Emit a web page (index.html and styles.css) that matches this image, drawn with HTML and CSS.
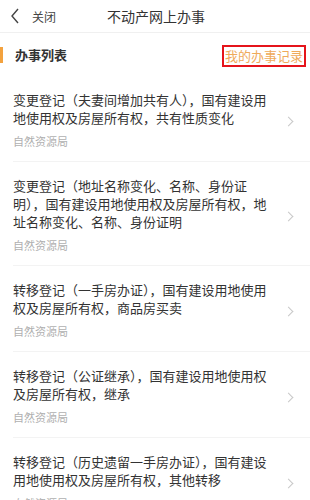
FILE: index.html
```html
<!DOCTYPE html>
<html lang="zh-CN">
<head>
    <meta charset="UTF-8">
    <meta name="viewport" content="width=device-width, initial-scale=1.0">
    <title>不动产网上办事</title>
    <link rel="stylesheet" href="styles.css">
</head>
<body>
    <div class="topbar">
        <div class="topbar-left">
            <svg class="back-icon" width="10" height="16" viewBox="0 0 10 16">
                <path d="M8 1 L2 8 L8 15" fill="none" stroke="#444" stroke-width="1.4"/>
            </svg>
            <span class="close-text">关闭</span>
        </div>
        <div class="topbar-title">不动产网上办事</div>
    </div>

    <div class="section-head">
        <div class="section-title">办事列表</div>
        <div class="record-link">我的办事记录</div>
    </div>

    <ul class="item-list">
        <li class="item">
            <div class="item-body">
                <div class="item-title">变更登记（夫妻间增加共有人），国有建设用地使用权及房屋所有权，共有性质变化</div>
                <div class="item-dept">自然资源局</div>
            </div>
            <span class="arrow"></span>
        </li>
        <li class="item">
            <div class="item-body">
                <div class="item-title">变更登记（地址名称变化、名称、身份证明），国有建设用地使用权及房屋所有权，地址名称变化、名称、身份证明</div>
                <div class="item-dept">自然资源局</div>
            </div>
            <span class="arrow"></span>
        </li>
        <li class="item">
            <div class="item-body">
                <div class="item-title">转移登记（一手房办证），国有建设用地使用权及房屋所有权，商品房买卖</div>
                <div class="item-dept">自然资源局</div>
            </div>
            <span class="arrow"></span>
        </li>
        <li class="item">
            <div class="item-body">
                <div class="item-title">转移登记（公证继承），国有建设用地使用权及房屋所有权，继承</div>
                <div class="item-dept">自然资源局</div>
            </div>
            <span class="arrow"></span>
        </li>
        <li class="item">
            <div class="item-body">
                <div class="item-title">转移登记（历史遗留一手房办证），国有建设用地使用权及房屋所有权，其他转移</div>
                <div class="item-dept">自然资源局</div>
            </div>
            <span class="arrow"></span>
        </li>
    </ul>
</body>
</html>
```

FILE: styles.css
```css
body {
    font-family: "Noto Sans CJK SC", "Noto Sans", sans-serif;
    background-color: #ffffff;
    color: #333;
    margin: 0;
    padding: 0;
}

.topbar {
    position: relative;
    height: 32px;
    display: flex;
    align-items: center;
    justify-content: center;
    border-bottom: 1px solid #f0f0f0;
}

.topbar-left {
    position: absolute;
    left: 10px;
    top: 0;
    height: 32px;
    display: flex;
    align-items: center;
}

.back-icon {
    display: block;
}

.close-text {
    margin-left: 12px;
    font-size: 12px;
    color: #444;
}

.topbar-title {
    font-size: 14px;
    color: #333;
    padding-left: 2px;
}

.section-head {
    height: 43px;
    display: flex;
    align-items: center;
    justify-content: space-between;
}

.section-title {
    font-size: 13px;
    font-weight: bold;
    color: #333;
    padding-left: 15px;
    border-left: 4px solid #f3a23e;
    line-height: 16px;
    margin-left: -1px;
    text-indent: -3px;
}

.record-link {
    font-size: 13px;
    color: #efaa5a;
    border: 2px solid #e5141b;
    line-height: 18px;
    padding: 0 1px;
    margin-right: 4px;
    margin-top: 2px;
}

.item-list {
    list-style: none;
    margin: 0;
    padding: 0;
}

.item {
    display: flex;
    align-items: center;
    margin-left: 13px;
    padding: 15px 0 12px;
    border-bottom: 1px solid #f3f3f3;
}

.item-body {
    width: 266px;
}

.item-title {
    font-size: 13px;
    line-height: 18px;
    color: #333;
}

.item-dept {
    font-size: 11px;
    line-height: 16px;
    color: #b0b0b0;
    margin-top: 6px;
}

.arrow {
    width: 6px;
    height: 6px;
    border-top: 1px solid #c8c8c8;
    border-right: 1px solid #c8c8c8;
    transform: rotate(45deg);
    margin-left: 6px;
    margin-top: 2px;
}
```
